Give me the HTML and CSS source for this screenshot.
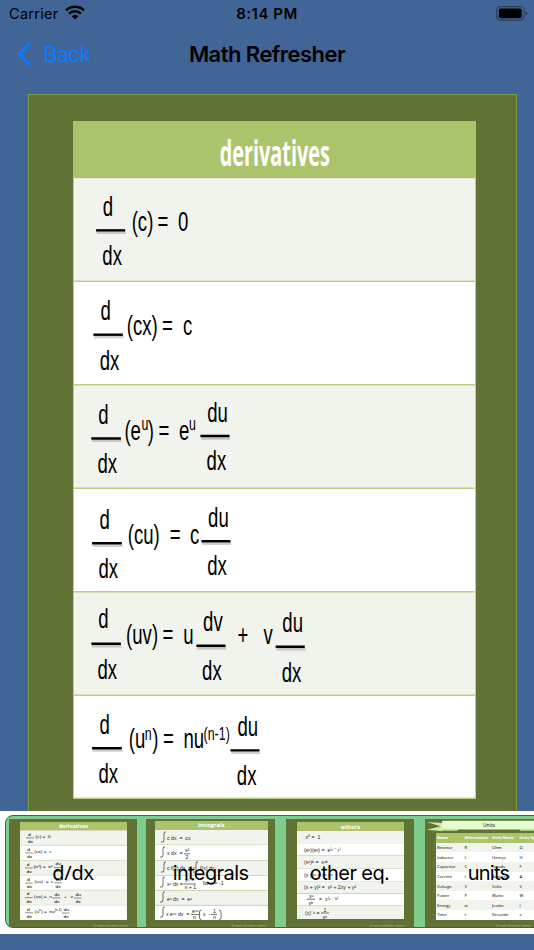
FILE: index.html
```html
<!DOCTYPE html>
<html lang="en">

<head>
    <meta charset="UTF-8">
    <meta name="viewport" content="width=device-width, initial-scale=1.0">
    <title>Math Refresher</title>
    <link rel="stylesheet" href="styles.css">
</head>

<body>
    <header>
        <div class="status-bar">
            <div class="carrier">
                <span>Carrier</span>
                <svg class="wifi" viewBox="0 0 20 15">
                    <path d="M1 5.4a12.8 12.8 0 0 1 18 0" />
                    <path d="M4.1 8.6a8.4 8.4 0 0 1 11.8 0" />
                    <path class="dot" d="M6.7 11.3a4.8 4.8 0 0 1 6.6 0L10 14.6z" />
                </svg>
            </div>
            <span class="time">8:14 PM</span>
            <svg class="battery" viewBox="0 0 32 15">
                <rect class="shell" x="0.7" y="0.7" width="27.4" height="13.4" rx="3.8" />
                <rect x="2.8" y="2.6" width="23" height="9.6" rx="2" />
                <path class="tip" d="M29.7 5.3q1.7 .6 1.7 2.1t-1.7 2.1z" />
            </svg>
        </div>
        <nav>
            <a class="back">
                <svg viewBox="0 0 16 26"><path d="M13.2 2L2.4 13l10.8 11" /></svg>
                <span>Back</span>
            </a>
            <h1>Math Refresher</h1>
        </nav>
    </header>

    <main class="board">
        <svg class="sheet" viewBox="0 0 618 677" preserveAspectRatio="none">
            <g id="derivatives">
                <rect class="head" width="618" height="57" />
                <rect class="odd" y="57" width="618" height="103.3" />
                <rect class="even" y="160.3" width="618" height="103.3" />
                <rect class="odd" y="263.6" width="618" height="103.4" />
                <rect class="even" y="367" width="618" height="103.3" />
                <rect class="odd" y="470.3" width="618" height="103.4" />
                <rect class="even" y="573.7" width="618" height="103.3" />
                <path class="rule" d="M0 160H618M0 263.3H618M0 366.6H618M0 470H618M0 573.4H618M0 676.3H618M.8 57V677M617.2 57V677" />
                <text class="sheet-title" x="225" y="44.8" textLength="169" lengthAdjust="spacingAndGlyphs">derivatives</text>

                <!-- constant -->
                <g transform="translate(0 57)">
                    <path class="shade" d="M36.4 54.6H81" />
                    <path class="bar" d="M35.4 52.2H80" />
                    <text x="45.7" y="37.7">d</text>
                    <text x="45" y="86.7">dx</text>
                    <text x="90" y="53.3">(c)</text>
                    <text x="129.7" y="53.3">=</text>
                    <text x="161" y="53.3">0</text>
                </g>

                <!-- constant times x -->
                <g transform="translate(0 160.2)">
                    <path class="shade" d="M32.3 55.6H77.5" />
                    <path class="bar" d="M31.3 53.2H76.5" />
                    <text x="42.2" y="38.5">d</text>
                    <text x="41" y="88.1">dx</text>
                    <text x="82.5" y="53.8">(cx)</text>
                    <text x="136.5" y="53.8">=</text>
                    <text x="168.6" y="53.8">c</text>
                </g>

                <!-- exponential -->
                <g transform="translate(0 263.6)">
                    <path class="shade" d="M29.2 55.8H74.4M196.4 53.4H241" />
                    <path class="bar" d="M28.2 53.4H73.4M195.4 51H240" />
                    <text x="38.6" y="38.7">d</text>
                    <text x="37.5" y="88.1">dx</text>
                    <text x="78.8" y="54.7">(e</text>
                    <text class="sup" x="105" y="45.4">u</text>
                    <text x="114.8" y="54.7">)</text>
                    <text x="131.3" y="54.7">=</text>
                    <text x="162.6" y="54.7">e</text>
                    <text class="sup" x="177.9" y="45.4">u</text>
                    <text x="205.8" y="36.7">du</text>
                    <text x="204.8" y="85.1">dx</text>
                </g>

                <!-- constant times u -->
                <g transform="translate(0 367)">
                    <path class="shade" d="M30.2 57.1H75.9M198 55.1H242.5" />
                    <path class="bar" d="M29.2 54.7H74.9M197 52.7H241.5" />
                    <text x="40.6" y="40">d</text>
                    <text x="39" y="89.3">dx</text>
                    <text x="84" y="55.3">(cu)</text>
                    <text x="148.2" y="55.3">=</text>
                    <text x="179.4" y="55.3">c</text>
                    <text x="207.2" y="38">du</text>
                    <text x="205.7" y="86.7">dx</text>
                </g>

                <!-- product -->
                <g transform="translate(0 470.3)">
                    <path class="shade" d="M29.2 54.1H74.4M190.2 56.1H234.8M311.8 57.1H356.4" />
                    <path class="bar" d="M28.2 51.7H73.4M189.2 53.7H233.8M310.8 54.7H355.4" />
                    <text x="38.6" y="36.4">d</text>
                    <text x="37.5" y="86.4">dx</text>
                    <text x="81.4" y="52">(uv)</text>
                    <text x="137.4" y="52">=</text>
                    <text x="169" y="52">u</text>
                    <text x="199.5" y="39">dv</text>
                    <text x="198" y="88">dx</text>
                    <text x="252.3" y="52">+</text>
                    <text x="292.3" y="52">v</text>
                    <text x="321" y="40.4">du</text>
                    <text x="320" y="89.4">dx</text>
                </g>

                <!-- power -->
                <g transform="translate(0 573.7)">
                    <path class="shade" d="M30.2 55H75.9M242.5 57.1H287" />
                    <path class="bar" d="M29.2 52.6H74.9M241.5 54.7H286" />
                    <text x="40.6" y="38">d</text>
                    <text x="39" y="87.6">dx</text>
                    <text x="85.5" y="52.6">(u</text>
                    <text class="sup" x="110.2" y="44.3">n</text>
                    <text x="121.5" y="52.6">)</text>
                    <text x="138" y="52.6">=</text>
                    <text x="169.5" y="52.6">nu</text>
                    <text class="sup" x="200.3" y="44.3">(n-1)</text>
                    <text x="252.3" y="40">du</text>
                    <text x="251.3" y="89.3">dx</text>
                </g>
            </g>
        </svg>
    </main>

    <section class="picker">
        <div class="strip">
            <div class="card">
                <svg class="mini" viewBox="0 0 618 677" preserveAspectRatio="none">
                    <use href="#derivatives" />
                </svg>
                <small>© math refresher sheets</small>
                <span class="label l1">d/dx</span>
            </div>

            <div class="card second">
                <svg class="mini" viewBox="0 0 113 99">
                    <rect class="head" width="113" height="8.8" />
                    <rect class="odd" y="8.8" width="113" height="15.2" />
                    <rect class="even" y="24" width="113" height="15.5" />
                    <rect class="odd" y="39.5" width="113" height="15" />
                    <rect class="even" y="54.5" width="113" height="15" />
                    <rect class="odd" y="69.5" width="113" height="15" />
                    <rect class="even" y="84.5" width="113" height="14.5" />
                    <path class="thin" d="M0 23.6H113M0 69.3H113M0 84.2H113" />
                    <text class="mini-title" x="56.5" y="6">integrals</text>
                    <path class="integral" d="M11 11q-2-1-2 2v6q0 3-3 2M10 26q-2-1-2 2v6q0 3-3 2M11 41q-2-1-2 2v6q0 3-3 2M43 41q-2-1-2 2v6q0 3-3 2M10 56q-2-1-2 2v6q0 3-3 2M10 71q-2-1-2 2v6q0 3-3 2M10 86q-2-1-2 2v6q0 3-3 2" />
                    <text x="12" y="19">c dx  =  cx</text>
                    <text x="12" y="34">x dx  =</text>
                    <text x="30" y="31.4">x²</text>
                    <text x="30.5" y="38">2</text>
                    <text x="12" y="49">c f(x) dx  = c</text>
                    <text x="45" y="49">f(x) dx</text>
                    <text x="12" y="65">xⁿ dx =</text>
                    <text x="30" y="61">xⁿ⁺¹</text>
                    <text x="29.5" y="68.3">n + 1</text>
                    <text x="48" y="64">for n ≠ -1</text>
                    <text x="12" y="80">eˣ dx  =  eˣ</text>
                    <text x="11" y="95">x eⁿˣ dx  =</text>
                    <text x="37" y="92">eⁿˣ</text>
                    <text x="38" y="98">n</text>
                    <text x="48" y="95">x  -</text>
                    <text x="58" y="92">1</text>
                    <text x="58" y="98">n</text>
                    <path class="fraction" d="M29 32.8H35M28.5 63H41M36 93.4H44M56 93.4H62M46.5 89q-2 0-2 2v6q0 1.5 2 1.5M64 89q2 0 2 2v6q0 1.5-2 1.5" />
                </svg>
                <small>© math refresher sheets</small>
                <span class="label l2">integrals</span>
            </div>

            <div class="card third">
                <svg class="mini" viewBox="0 0 107 97">
                    <rect class="head" width="107" height="9" />
                    <rect class="odd" y="9" width="107" height="13" />
                    <rect class="even" y="22" width="107" height="11.8" />
                    <rect class="odd" y="33.8" width="107" height="13" />
                    <rect class="even" y="46.8" width="107" height="12.3" />
                    <rect class="odd" y="59.1" width="107" height="12.5" />
                    <rect class="even" y="71.6" width="107" height="12.2" />
                    <rect class="odd" y="83.8" width="107" height="13.2" />
                    <path class="thin" d="M0 33.6H107M0 71.5H107M0 83.8H107" />
                    <text class="mini-title" x="53.5" y="6.8">others</text>
                    <text x="8.5" y="16.8">x⁰ =  1</text>
                    <text x="7" y="29.7">(eˣ)(eʸ) =  e⁽ˣ ⁺ ʸ⁾</text>
                    <text x="7" y="42.2">(xᵃ)ᵇ =  xᵃᵇ</text>
                    <text x="7" y="55">(x y)ᵃ = xᵃ yᵃ</text>
                    <text x="7" y="67.4">(x + y)² =  x² + 2xy + y²</text>
                    <text x="12" y="76.3">xᵃ</text>
                    <text x="11.5" y="83">xᵇ</text>
                    <text x="22" y="79">=  x⁽ᵃ ⁻ ᵇ⁾</text>
                    <text x="8" y="93">(x)⁻ᵃ =</text>
                    <text x="26.5" y="89.5">1</text>
                    <text x="25.5" y="96.5">xᵃ</text>
                    <path class="fraction" d="M9.5 77.2H18M24 91H32" />
                </svg>
                <small>© math refresher sheets</small>
                <span class="label l3">other eq.</span>
            </div>

            <div class="card fourth">
                <svg class="ribbon" viewBox="0 0 120 13">
                    <path class="tail" d="M2 2l16 1v8.3L2 9.8l13.5-3.6z" />
                    <path class="fold" d="M17 8.8h17l-2 2.3H17zM95 8.8h25v2.3H95z" />
                    <path class="band" d="M18.5 .8H120v8.8H17V2.2q0-1.4 1.5-1.4z" />
                    <text x="64" y="7">Units</text>
                </svg>
                <table>
                    <thead>
                        <tr><th>Name</th><th>Abbreviation</th><th>Units Name</th><th>Units Symbol</th></tr>
                    </thead>
                    <tbody>
                        <tr><td>Resistor</td><td>R</td><td>Ohm</td><td>Ω</td></tr>
                        <tr><td>Inductor</td><td>L</td><td>Henrys</td><td>H</td></tr>
                        <tr><td>Capacitor</td><td>C</td><td>Farads</td><td>F</td></tr>
                        <tr><td>Current</td><td>I</td><td>Amperes</td><td>A</td></tr>
                        <tr><td>Voltage</td><td>V</td><td>Volts</td><td>V</td></tr>
                        <tr><td>Power</td><td>P</td><td>Watts</td><td>W</td></tr>
                        <tr><td>Energy</td><td>w</td><td>Joules</td><td>J</td></tr>
                        <tr><td>Time</td><td>t</td><td>Seconds</td><td>s</td></tr>
                    </tbody>
                </table>
                <small>© math refresher sheets</small>
                <span class="label l4">units</span>
            </div>
        </div>
    </section>
</body>

</html>
```
FILE: styles.css
```css
* {
    box-sizing: border-box;
}

body {
    margin: 0;
    width: 534px;
    height: 950px;
    overflow: hidden;
    background-color: #426598;
    font-family: Inter, "Liberation Sans", sans-serif;
    color: #000;
}

header {
    height: 94px;
}

.status-bar {
    display: grid;
    grid-template-columns: 1fr auto 1fr;
    align-items: center;
    height: 27px;
    padding: 0 6px 0 9px;
    font-size: 14.5px;
}

.carrier {
    display: flex;
    align-items: center;
    gap: 6px;
    letter-spacing: 0.3px;
}

.wifi {
    width: 20px;
    height: 15px;
    margin-top: -2px;
    fill: none;
    stroke: #000;
    stroke-width: 2.6;
}

.wifi .dot {
    fill: #000;
    stroke: none;
}

.time {
    margin-left: -3px;
    font-size: 15px;
    font-weight: 600;
    letter-spacing: 0.5px;
}

.battery {
    width: 32px;
    height: 15px;
    justify-self: end;
    margin-top: -1px;
}

.battery .shell {
    fill: none;
    stroke: #293f5f;
    stroke-width: 1.2;
}

.battery .tip {
    fill: #293f5f;
}

nav {
    display: grid;
    grid-template-columns: 1fr auto 1fr;
    align-items: center;
    height: 53px;
    padding: 0 17px;
}

.back {
    display: flex;
    align-items: center;
    gap: 10.5px;
    color: #0a7cff;
    font-size: 21.5px;
    letter-spacing: -0.8px;
}

.back svg {
    width: 16px;
    height: 26px;
    fill: none;
    stroke: #0a7cff;
    stroke-width: 3.2;
}

h1 {
    margin: 0;
    font-size: 22px;
    font-weight: 600;
    letter-spacing: -0.55px;
}

/* formula sheet */
.board {
    width: 489px;
    height: 717px;
    margin-left: 28px;
    padding: 26px 0 0 44px;
    background-color: #607234;
    border: 1.5px solid #7f9a47;
    border-bottom: none;
}

.sheet {
    display: block;
    width: 403px;
    height: 678px;
}

svg text {
    font-family: "Liberation Sans", Arial, sans-serif;
    white-space: pre;
}

#derivatives text {
    font-size: 28.5px;
}

#derivatives .sup {
    font-size: 19px;
}

#derivatives .sheet-title {
    font-family: "Open Sans", "Noto Sans", sans-serif;
    font-size: 35px;
    font-weight: 700;
    fill: #fff;
}

.head {
    fill: #abc46c;
}

.odd {
    fill: #f1f4ed;
}

.even {
    fill: #fff;
}

.rule {
    fill: none;
    stroke: #b9d085;
    stroke-width: 1.5;
}

.bar {
    stroke: #000;
    stroke-width: 2.4;
}

.shade {
    stroke: #000;
    stroke-width: 2.4;
    opacity: 0.18;
}

/* thumbnails */
.picker {
    height: 123px;
    padding: 4px 0 0 5px;
    background-color: #fff;
    overflow: hidden;
}

.strip {
    display: flex;
    width: 560px;
    height: 113px;
    padding: 3px 0 0 3px;
    background-color: #7fcd8e;
    border: 1px solid #3d6350;
    border-radius: 8px;
    overflow: hidden;
}

.card {
    position: relative;
    flex: none;
    width: 128px;
    height: 110px;
    padding: 3px 0 0 11px;
    background-color: #607234;
}

.second {
    width: 129px;
    margin-left: 9px;
    padding: 2px 0 0 8.5px;
}

.third {
    margin-left: 10.5px;
    padding: 3px 0 0 11.5px;
}

.fourth {
    margin-left: 11px;
    padding: 1px 0 0;
}

.mini {
    display: block;
    width: 107px;
    height: 98px;
}

.second .mini {
    width: 113px;
    height: 99px;
}

.third .mini {
    height: 97px;
}

.mini > text {
    font-size: 5.2px;
    fill: #222;
}

.mini > .mini-title {
    font-family: "Open Sans", sans-serif;
    font-size: 6px;
    font-weight: 700;
    fill: #fff;
    text-anchor: middle;
}

.thin {
    stroke: #c8daa0;
    stroke-width: 0.6;
}

.integral,
.fraction {
    fill: none;
    stroke: #333;
    stroke-width: 0.7;
}

.ribbon {
    display: block;
    width: 120px;
    height: 13px;
}

.ribbon .band {
    fill: #e8fbd0;
}

.ribbon .tail {
    fill: #d0eda7;
}

.ribbon .fold {
    fill: #a5c776;
}

.ribbon text {
    font-family: "Open Sans", sans-serif;
    font-size: 5px;
    text-anchor: middle;
}

table {
    width: 110px;
    margin-left: 11px;
    table-layout: fixed;
    border-collapse: collapse;
    font-family: "Open Sans", sans-serif;
    font-size: 4.2px;
    line-height: 5px;
    background-color: #fff;
}

th,
td {
    height: 9.65px;
    padding: 0 0 0 1.5px;
    text-align: left;
    white-space: nowrap;
}

th {
    font-size: 3.7px;
    color: #fff;
    background-color: #abc46c;
}

tbody tr:nth-child(odd) {
    background-color: #f1f4ed;
}

small {
    position: absolute;
    right: 9px;
    bottom: 1px;
    font-size: 3px;
    line-height: 4px;
    color: #a9b38d;
}

.fourth small {
    right: 22px;
}

.label {
    position: absolute;
    top: 42px;
    left: 0;
    width: 100%;
    text-align: center;
    font-size: 20px;
    line-height: 24px;
    letter-spacing: -0.6px;
    white-space: nowrap;
}

.l1 {
    font-family: "Noto Sans", sans-serif;
    letter-spacing: -0.3px;
}

.l4 {
    letter-spacing: -0.8px;
}
```
